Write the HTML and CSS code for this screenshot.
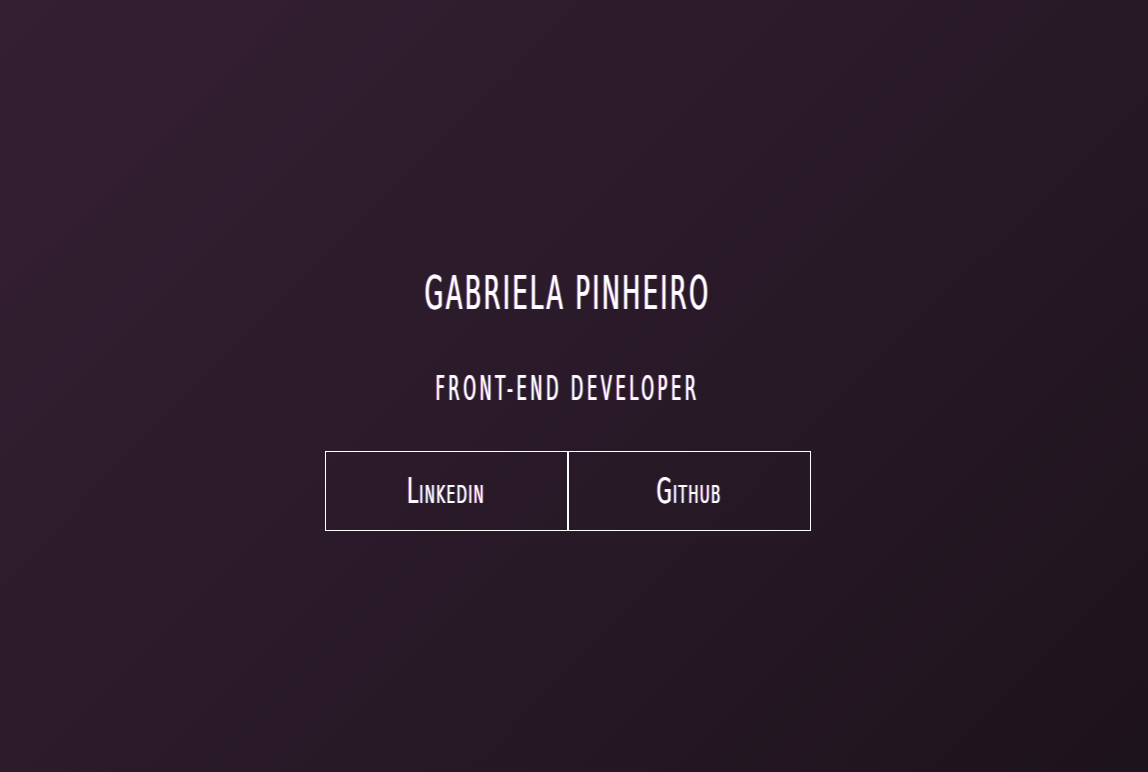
FILE: index.html
```html
<!DOCTYPE html>
<html lang="pt">
<head>
<meta charset="utf-8">
<title>Gabriela Pinheiro</title>
<link rel="stylesheet" href="styles.css">
</head>
<body>
<main class="hero">
  <h1 class="name"><span class="tall">GABRIELA PINHEIRO</span></h1>
  <h2 class="role"><span class="tall">FRONT-END DEVELOPER</span></h2>
  <nav class="links">
    <a class="btn" href="#"><span class="tall">Linkedin</span></a>
    <a class="btn" href="#"><span class="tall">Github</span></a>
  </nav>
</main>
</body>
</html>
```
FILE: styles.css
```css
html, body {
  margin: 0;
  height: 100%;
}
body {
  background: linear-gradient(135deg, #341f32 0%, #2a1a29 50%, #1d131c 100%);
  color: #fff;
  font-family: "Liberation Sans Narrow", "DejaVu Sans Condensed", "Liberation Sans", sans-serif;
  font-stretch: condensed;
}
.hero {
  height: 100%;
  display: flex;
  flex-direction: column;
  align-items: center;
  justify-content: center;
  padding: 32px 13px 0 0;
  box-sizing: border-box;
}
.tall {
  display: inline-block;
  transform: scaleY(1.6);
  text-shadow: -1px 0 rgba(255, 120, 170, 0.55), 1px 0 rgba(120, 200, 255, 0.55);
}
.name {
  margin: 0;
  font-size: 27px;
  font-weight: normal;
  letter-spacing: 2.3px;
  line-height: 40px;
}
.name .tall {
  transform: scaleY(1.72);
}
.role {
  margin: 60px 0 0;
  font-size: 18px;
  font-weight: normal;
  letter-spacing: 3.6px;
  line-height: 30px;
}
.role .tall {
  transform: scaleY(1.9);
}
.links {
  display: flex;
  margin-top: 47px;
}
.btn {
  width: 241px;
  height: 78px;
  border: 1px solid #fff;
  display: flex;
  align-items: center;
  justify-content: center;
  color: #fff;
  text-decoration: none;
  font-variant: small-caps;
  font-size: 22px;
  letter-spacing: 1.4px;
}
```
